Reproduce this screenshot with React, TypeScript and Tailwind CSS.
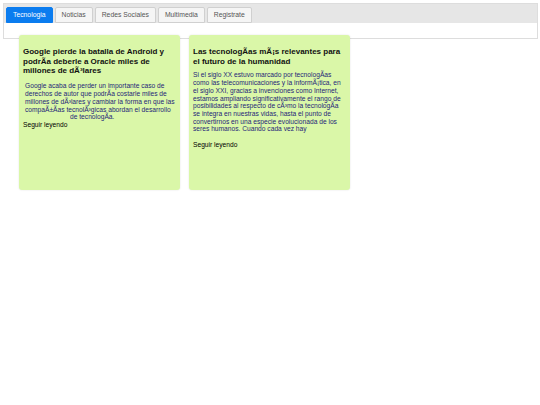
const tabs = ["Tecnologia", "Noticias", "Redes Sociales", "Multimedia", "Registrate"]

export default function App() {
  return (
    <div className="min-h-[405px] w-[540px] bg-white font-['Liberation_Sans',Arial,sans-serif]">
      {/* Tab bar */}
      <div className="ml-[3px] mt-[3px] h-[36px] w-[535px] border border-[#dddddd] bg-white">
        <div className="flex h-[19px] items-end gap-[2px] bg-[#e6e6e6] pl-[2px]">
          {tabs.map((tab, i) => (
            <div
              key={tab}
              className={
                i === 0
                  ? "flex h-[16px] items-center rounded-t-[2px] border border-[#0b7cef] bg-[#0b7cef] px-[6px] text-[6.8px] text-white"
                  : "flex h-[16px] items-center rounded-t-[2px] border border-[#d0d0d0] bg-[#f5f5f5] px-[6px] text-[6.8px] text-[#555555]"
              }
            >
              {tab}
            </div>
          ))}
        </div>
      </div>

      {/* Cards */}
      <div className="-mt-[4px] flex gap-[9px] pl-[19px]">
        <div className="h-[155px] w-[161px] rounded-[3px] bg-[#daf7a8] pl-[4px] pr-[2px] pt-[12px] shadow-[0_0_2px_rgba(0,0,0,0.12)]">
          <h3 className="mb-[6px] text-[8px] font-bold leading-[9.7px] text-[#111111]">
            Google pierde la batalla de Android y podrÃa deberle a Oracle miles de millones de dÃ³lares
          </h3>
          <div className="pl-[2px] text-[6.67px] leading-[7.8px] text-[#1f1f78]">
            Google acaba de perder un importante caso de
            <br />
            derechos de autor que podrÃa costarle miles de
            <br />
            millones de dÃ³lares y cambiar la forma en que las
            <br />
            compaÃ±Ãas tecnolÃ³gicas abordan el desarrollo
            <span className="block pl-[45px]">de tecnologÃa.</span>
          </div>
          <div className="text-[6.67px] leading-[7.8px] text-black">Seguir leyendo</div>
        </div>

        <div className="h-[155px] w-[161px] rounded-[3px] bg-[#daf7a8] pl-[4px] pr-[2px] pt-[12px] shadow-[0_0_2px_rgba(0,0,0,0.12)]">
          <h3 className="mb-[5px] text-[8px] font-bold leading-[9.7px] text-[#111111]">
            Las tecnologÃas mÃ¡s relevantes para el futuro de la humanidad
          </h3>
          <p className="mb-[8px] text-[6.67px] leading-[7.7px] text-[#1f1f78]">
            Si el siglo XX estuvo marcado por tecnologÃas
            <br />
            como las telecomunicaciones y la informÃ¡tica, en
            <br />
            el siglo XXI, gracias a invenciones como Internet,
            <br />
            estamos ampliando significativamente el rango de
            <br />
            posibilidades al respecto de cÃ³mo la tecnologÃa
            <br />
            se integra en nuestras vidas, hasta el punto de
            <br />
            convertirnos en una especie evolucionada de los
            <br />
            seres humanos. Cuando cada vez hay
          </p>
          <div className="text-[6.67px] leading-[7.7px] text-black">Seguir leyendo</div>
        </div>
      </div>
    </div>
  )
}
